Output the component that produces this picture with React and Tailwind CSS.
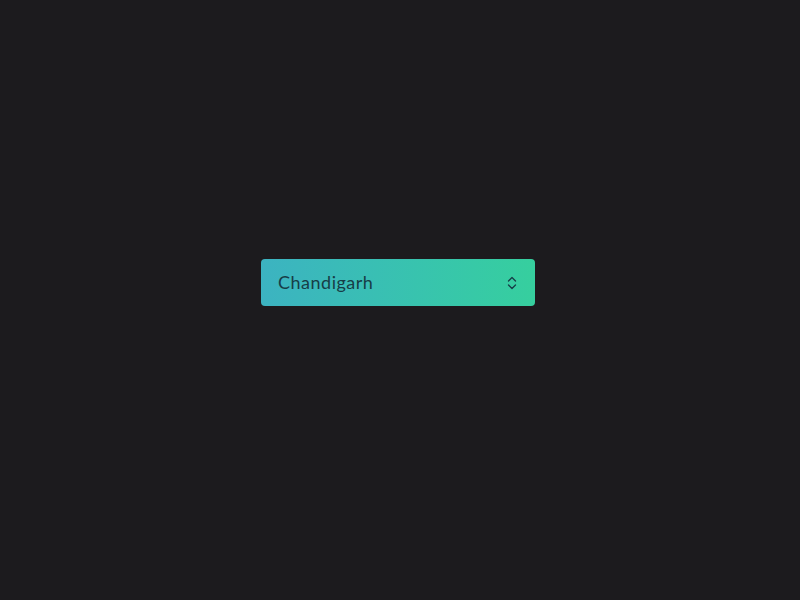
import React from 'react';

const App = () => {
  return (
    <div className="w-[800px] h-[600px] bg-[#1c1b1e] pt-[259px] pl-[261px]" style={{ fontFamily: 'Lato, "Open Sans", sans-serif' }}>
      <button
        type="button"
        className="w-[274px] h-[47px] rounded-[4px] bg-gradient-to-r from-[#3cb3c1] to-[#36cf9e] flex items-center justify-between pl-[17px] pr-[17px] text-left"
      >
        <span className="text-[18px] text-[#173d47] tracking-[0.5px]">Chandigarh</span>
        <svg width="12" height="18" viewBox="0 0 12 18" fill="none" stroke="#173d47" strokeWidth="1.3" strokeLinecap="round" strokeLinejoin="round">
          <path d="M2.5 7 L6 3.5 L9.5 7" />
          <path d="M2.5 11 L6 14.5 L9.5 11" />
        </svg>
      </button>
    </div>
  );
};

export default App;
